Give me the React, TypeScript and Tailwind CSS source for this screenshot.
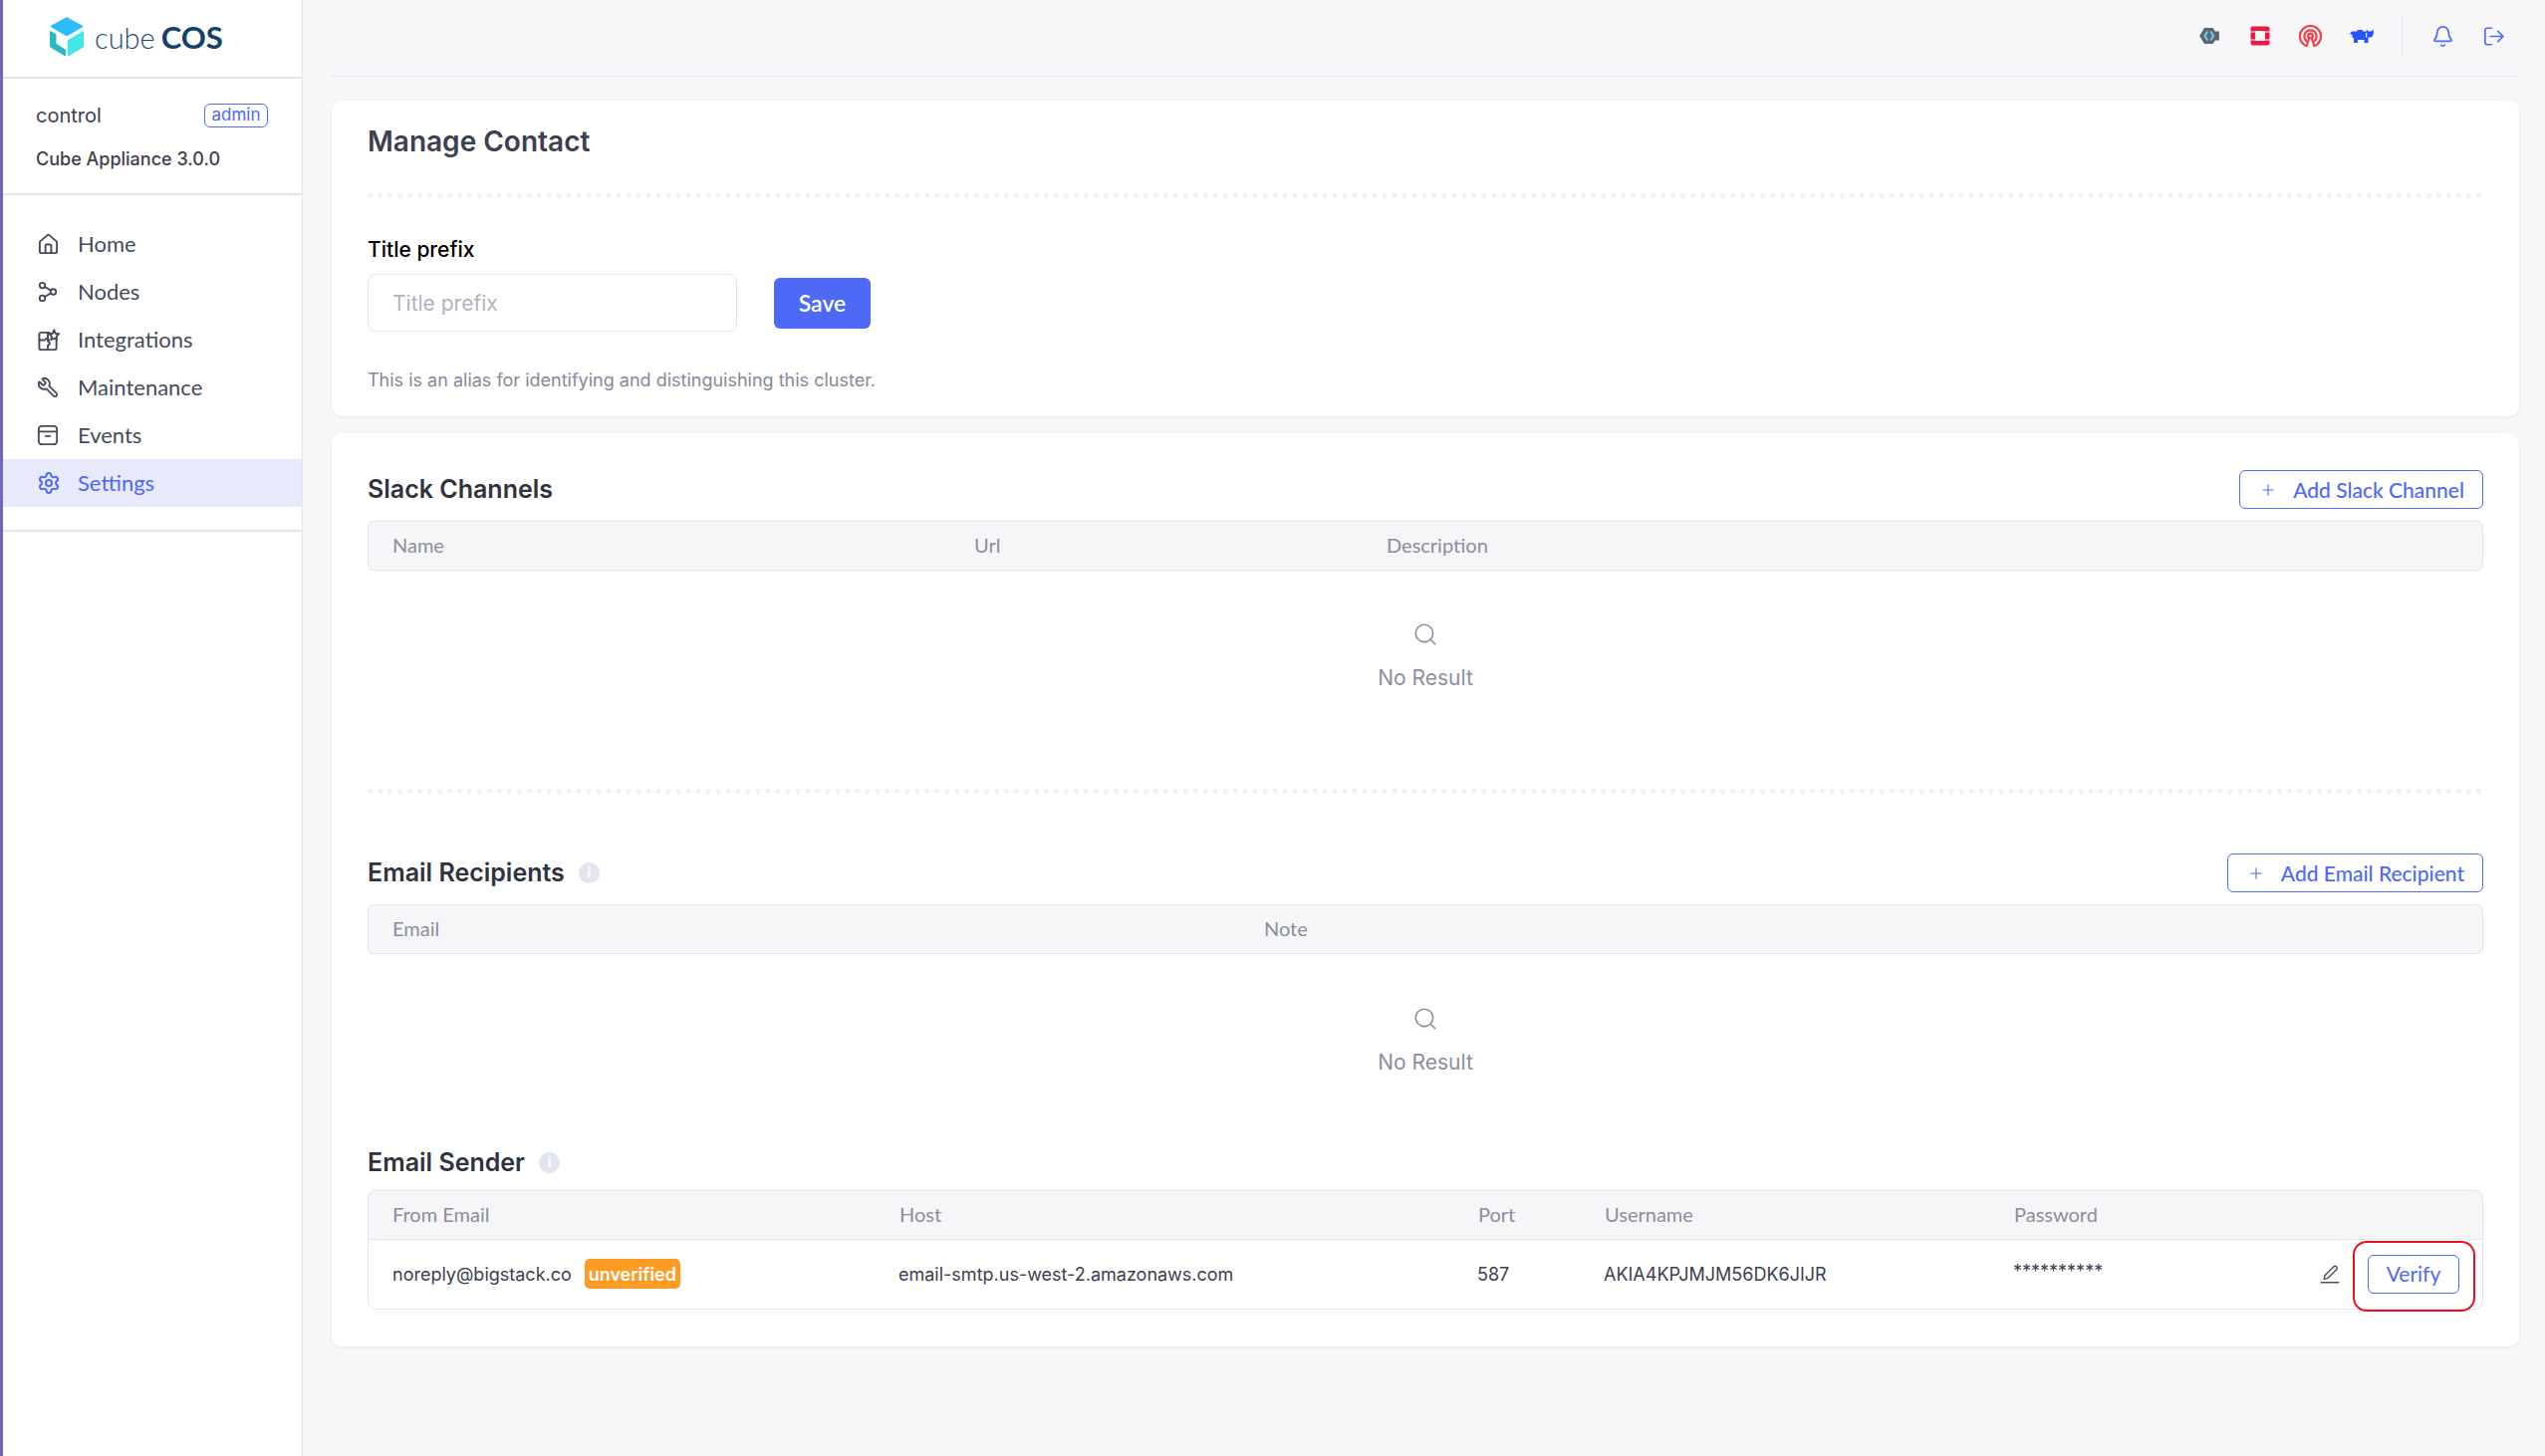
import { Bell, House, Plus, Search, Settings, Share2, Wrench } from "lucide-react";

const dotted = "border-t-[5px] border-dotted border-[#eef0fb]";

function CubeLogo() {
  return (
    <svg viewBox="0 0 36 40" className="h-[40px] w-[36px]" strokeLinejoin="round">
      <path d="M18 1 L33.500 9.500 L18 18.500 L2.500 9.500 Z" fill="#2ebcff" stroke="#2ebcff" strokeWidth="1.500" />
      <path d="M19.500 23.500 L34.500 14.500 L34.500 30 L19.500 39 Z" fill="#3fe8e6" stroke="#3fe8e6" strokeWidth="1" />
      <path d="M1.500 14.500 L7 17.500 L7 27 L16.500 33 L16.500 39 L1.500 30 Z" fill="#2bb8c2" stroke="#2bb8c2" strokeWidth="1" />
    </svg>
  );
}

function PuzzleIcon() {
  return (
    <svg viewBox="0 0 24 24" className="h-[23px] w-[23px]" fill="none" stroke="currentColor" strokeWidth="2" strokeLinejoin="round" strokeLinecap="round">
      <path d="M13 4H4.500A2 2 0 0 0 2.500 6v14a2 2 0 0 0 2 2h14a2 2 0 0 0 2-2v-8" />
      <path d="M2.500 12h5.500c1 0 1-2 2.500-2s1.500 2 2.500 2M11.500 22v-4c0-1 2-1 2-2.500s-2-1.500-2-2.500V4" />
      <path d="M18 1.500l1.500 3.500 3.500.5-2.500 2.500.5 3.500-3-1.500-3 1.500.5-3.500-2.500-2.500 3.500-.5z" />
    </svg>
  );
}

function ArchiveIcon() {
  return (
    <svg viewBox="0 0 24 24" className="h-[22px] w-[22px]" fill="none" stroke="currentColor" strokeWidth="2" strokeLinecap="round">
      <rect x="2" y="2" width="20" height="20" rx="3.500" />
      <path d="M2 8h20M9.500 13h5" />
    </svg>
  );
}

function LogOutIcon() {
  return (
    <svg viewBox="0 0 24 22" className="h-[19px] w-[21px]" fill="none" stroke="currentColor" strokeWidth="1.900" strokeLinecap="round" strokeLinejoin="round">
      <path d="M9.500 1.500H4.500a2.500 2.500 0 0 0-2.500 2.500v14a2.500 2.500 0 0 0 2.500 2.500h5" />
      <path d="M8 11h15M17 5l6 6-6 6" />
    </svg>
  );
}

function HexIcon() {
  return (
    <svg viewBox="0 0 24 20" className="h-[18px] w-[22px]">
      <path d="M6.500 1h9.500l2.500 4h4.500v10h-4.500L16 19H6.500L1 10z" fill="#5f6672" />
      <path d="M10 5l-3 5 3 5M13.500 5l3 5-3 5" fill="none" stroke="#62cdf5" strokeWidth="2.300" />
    </svg>
  );
}

function RedSquareIcon() {
  return (
    <svg viewBox="0 0 20 20" className="h-[20px] w-[20px]">
      <rect x="0.500" y="0.500" width="19" height="19" rx="2" fill="#f0183f" />
      <rect x="5" y="5" width="10" height="10" fill="#f7f7fa" />
      <path d="M0 6h5M15 6h5M0 14h5M15 14h5" stroke="#f7f7fa" strokeWidth="1" />
    </svg>
  );
}

function CephIcon() {
  return (
    <svg viewBox="0 0 24 24" className="h-[23px] w-[23px]" fill="none" stroke="#ef4349" strokeWidth="2.300" strokeLinecap="round">
      <path d="M6.500 21.500A11 11 0 1 1 17.500 21.500" />
      <path d="M8 17A6.400 6.400 0 1 1 16 17" />
      <circle cx="12" cy="11.500" r="2.400" />
      <path d="M10.200 14c.3 3-1.700 4.500-2 8M13.800 14c-.3 3 1.700 4.500 2 8" />
    </svg>
  );
}

function BullIcon() {
  return (
    <svg viewBox="0 0 24 14" className="h-[14px] w-[24px]" fill="#2453ff">
      <path d="M0 5L2 2.500H7.500V1H13V2.500H17L16.500 0.500L19 2.500H21.500L23.500 0.500L24 4.500L22 8.500H18.500V14H14.500V11H8V14H4V9H2.500V6Z" />
      <path d="M16 4h1.300v4.500H16z" fill="#f7f7fa" />
    </svg>
  );
}

function UnderlinedPencil() {
  return (
    <svg viewBox="0 0 24 24" className="h-[20px] w-[20px]" fill="none" stroke="#4c4f60" strokeWidth="1.700" strokeLinecap="round" strokeLinejoin="round">
      <path d="M5 18.500l1-4.500L16.500 3.500a2 2 0 0 1 3.500 3.500L9.500 17.500z" />
      <path d="M1.500 22.500h21" strokeWidth="2" />
    </svg>
  );
}

function InfoDot() {
  return (
    <span className="flex h-[21px] w-[21px] items-center justify-center rounded-full bg-[#e2e5f1] text-[13px] leading-none font-bold text-white">
      i
    </span>
  );
}

function NavItem({ icon, label, active }: { icon: React.ReactNode; label: string; active?: boolean }) {
  return (
    <div className={active ? "flex h-12 items-center bg-[#e8eafc] pl-[34px] text-[#4f69f7]" : "flex h-12 items-center pl-[34px] text-[#454a5c]"}>
      <span className="flex w-[41px] items-center">{icon}</span>
      <span className="font-[Lato,sans-serif] text-[22px] leading-none">{label}</span>
    </div>
  );
}

function AddButton({ label }: { label: string }) {
  return (
    <button className="flex h-[39px] items-center gap-[16px] rounded-[6px] border border-[#4f69f7] pr-[18px] pl-[19px] font-[Lato,sans-serif] text-[21px] font-medium text-[#4f69f7]">
      <Plus size={18} strokeWidth={1.500} />
      {label}
    </button>
  );
}

function SectionTitle({ title, info }: { title: string; info?: boolean }) {
  return (
    <div className="flex items-center gap-[14px]">
      <h2 className="text-[25px] leading-none font-semibold text-[#2f3340]">{title}</h2>
      {info && <InfoDot />}
    </div>
  );
}

function TableHead({ cols, round }: { cols: { label: string; w: string }[]; round: string }) {
  return (
    <div className={"flex h-[50px] items-center border border-[#e3e4ef] bg-[#f6f6f9] pb-[2px] pl-6 font-[Lato,sans-serif] text-[20px] text-[#8a8e9e] " + round}>
      {cols.map((c) => (
        <div key={c.label} className={c.w}>{c.label}</div>
      ))}
    </div>
  );
}

function NoResult() {
  return (
    <div className="flex flex-col items-center text-[#8a8e9e]">
      <Search size={26} strokeWidth={1.500} />
      <div className="mt-[20px] text-[21px] leading-none">No Result</div>
    </div>
  );
}

export default function App() {
  return (
    <div className="flex h-[1462px] w-[2555px] overflow-hidden bg-[#f7f7fa] font-[Inter,sans-serif]">
      <aside className="flex w-[304px] shrink-0 flex-col border-r border-l-[3px] border-r-[#e4e5ee] border-l-[#6f68b8] bg-white">
        <div className="flex h-[79px] shrink-0 items-center gap-[10px] border-b-2 border-[#e2e4f0] pb-[3px] pl-[46px]">
          <CubeLogo />
          <div className="flex items-baseline gap-[6px] font-[Lato,sans-serif] leading-none text-[#1f4a70]">
            <span className="text-[29px] font-light">cube</span>
            <span className="text-[31px] font-bold text-[#14406a]">COS</span>
          </div>
        </div>
        <div className="h-[117px] shrink-0 border-b-2 border-[#e2e4f0] pt-[25px] pr-[34px] pl-[33px]">
          <div className="flex h-[24px] items-center justify-between">
            <span className="text-[20px] text-[#3c4050]">control</span>
            <span className="flex h-[24px] w-[64px] items-center justify-center rounded-[6px] border border-[#4f69f7] text-[17px] text-[#4f69f7]">admin</span>
          </div>
          <div className="mt-[19px] text-[18px] leading-[26px] font-medium text-[#3c4050]">Cube Appliance 3.0.0</div>
        </div>
        <nav className="border-b-2 border-[#e2e4f0] pt-[25px] pb-[23px]">
          <NavItem icon={<House size={23} strokeWidth={2} />} label="Home" />
          <NavItem icon={<Share2 size={22} strokeWidth={2} className="-scale-x-100" />} label="Nodes" />
          <NavItem icon={<PuzzleIcon />} label="Integrations" />
          <NavItem icon={<Wrench size={22} strokeWidth={2} className="-scale-x-100" />} label="Maintenance" />
          <NavItem icon={<ArchiveIcon />} label="Events" />
          <NavItem icon={<Settings size={24} strokeWidth={2} />} label="Settings" active />
        </nav>
      </aside>

      <main className="flex min-w-0 flex-1 flex-col pr-[26px] pl-[29px]">
        <header className="flex h-[77px] shrink-0 items-center justify-end border-b border-[#e3e4ef] pb-[4px]">
          <div className="flex w-[51px] justify-center"><HexIcon /></div>
          <div className="flex w-[51px] justify-center"><RedSquareIcon /></div>
          <div className="flex w-[51px] justify-center"><CephIcon /></div>
          <div className="flex w-[51px] justify-center"><BullIcon /></div>
          <div className="mx-[15px] h-[36px] w-px bg-[#e3e4ef]" />
          <div className="flex w-[51px] justify-center text-[#4f69f7]"><Bell size={23} strokeWidth={1.800} /></div>
          <div className="flex w-[51px] justify-center text-[#4f69f7]"><LogOutIcon /></div>
        </header>

        <section className="mt-[24px] h-[317px] shrink-0 rounded-[10px] bg-white px-[36px] pt-[26px] shadow-[0_1px_3px_rgba(40,45,80,0.08)]">
          <h1 className="text-[28px] leading-[30px] font-semibold text-[#3c4050]">Manage Contact</h1>
          <div className={"mt-[37px] " + dotted} />
          <label className="mt-[40px] block text-[21px] leading-6 font-medium text-black">Title prefix</label>
          <div className="mt-[12px] flex items-center gap-[37px]">
            <input placeholder="Title prefix" className="h-[58px] w-[371px] rounded-[8px] border border-[#e2e3ee] bg-white px-[24px] text-[21px] outline-none placeholder:text-[#b0b3c2]" />
            <button className="h-[51px] w-[97px] rounded-[6px] bg-[#4f69f7] font-[Lato,sans-serif] text-[23px] font-semibold text-white">Save</button>
          </div>
          <p className="mt-[36px] text-[18px] leading-[26px] text-[#858998]">This is an alias for identifying and distinguishing this cluster.</p>
        </section>

        <section className="mt-[17px] h-[917px] shrink-0 rounded-[10px] bg-white px-[36px] pt-[37px] shadow-[0_1px_3px_rgba(40,45,80,0.08)]">
          <div className="flex h-[39px] items-center justify-between">
            <SectionTitle title="Slack Channels" />
            <AddButton label="Add Slack Channel" />
          </div>
          <div className="mt-[12px]">
            <TableHead
              round="rounded-[6px]"
              cols={[
                { label: "Name", w: "w-[584px]" },
                { label: "Url", w: "w-[414px]" },
                { label: "Description", w: "flex-1" },
              ]}
            />
          </div>
          <div className="pt-[51px]"><NoResult /></div>
          <div className={"mt-[101px] " + dotted} />

          <div className="mt-[60px] flex h-[39px] items-center justify-between">
            <SectionTitle title="Email Recipients" info />
            <AddButton label="Add Email Recipient" />
          </div>
          <div className="mt-[12px]">
            <TableHead
              round="rounded-[6px]"
              cols={[
                { label: "Email", w: "w-[875px]" },
                { label: "Note", w: "flex-1" },
              ]}
            />
          </div>
          <div className="pt-[52px]"><NoResult /></div>

          <div className="mt-[78px]"><SectionTitle title="Email Sender" info /></div>
          <div className="relative mt-[15px] h-[120px] rounded-[8px] border border-[#e3e4ef]">
            <div className="-m-px">
              <TableHead
                round="rounded-t-[8px]"
                cols={[
                  { label: "From Email", w: "w-[509px]" },
                  { label: "Host", w: "w-[581px]" },
                  { label: "Port", w: "w-[127px]" },
                  { label: "Username", w: "w-[411px]" },
                  { label: "Password", w: "flex-1" },
                ]}
              />
            </div>
            <div className="flex h-[70px] items-center pl-[24px] text-[18px] text-[#3c4050]">
              <div className="flex w-[508px] items-center gap-[13px]">
                noreply@bigstack.co
                <span className="flex h-[30px] w-[96px] items-center justify-center rounded-[5px] bg-[#fd9b25] text-[18px] font-semibold text-white">unverified</span>
              </div>
              <div className="w-[581px]">email-smtp.us-west-2.amazonaws.com</div>
              <div className="w-[127px]">587</div>
              <div className="w-[411px]">AKIA4KPJMJM56DK6JIJR</div>
              <div className="w-[308px] -translate-y-[3px]">**********</div>
              <UnderlinedPencil />
              <button className="ml-[28px] flex h-[39px] w-[92px] items-center justify-center rounded-[6px] border border-[#4f69f7] font-[Lato,sans-serif] text-[21px] text-[#4f69f7]">Verify</button>
            </div>
            <div className="absolute top-[50px] right-[7px] h-[71px] w-[123px] rounded-[14px] border-2 border-[#e5141f]" />
          </div>
        </section>
      </main>
    </div>
  );
}
